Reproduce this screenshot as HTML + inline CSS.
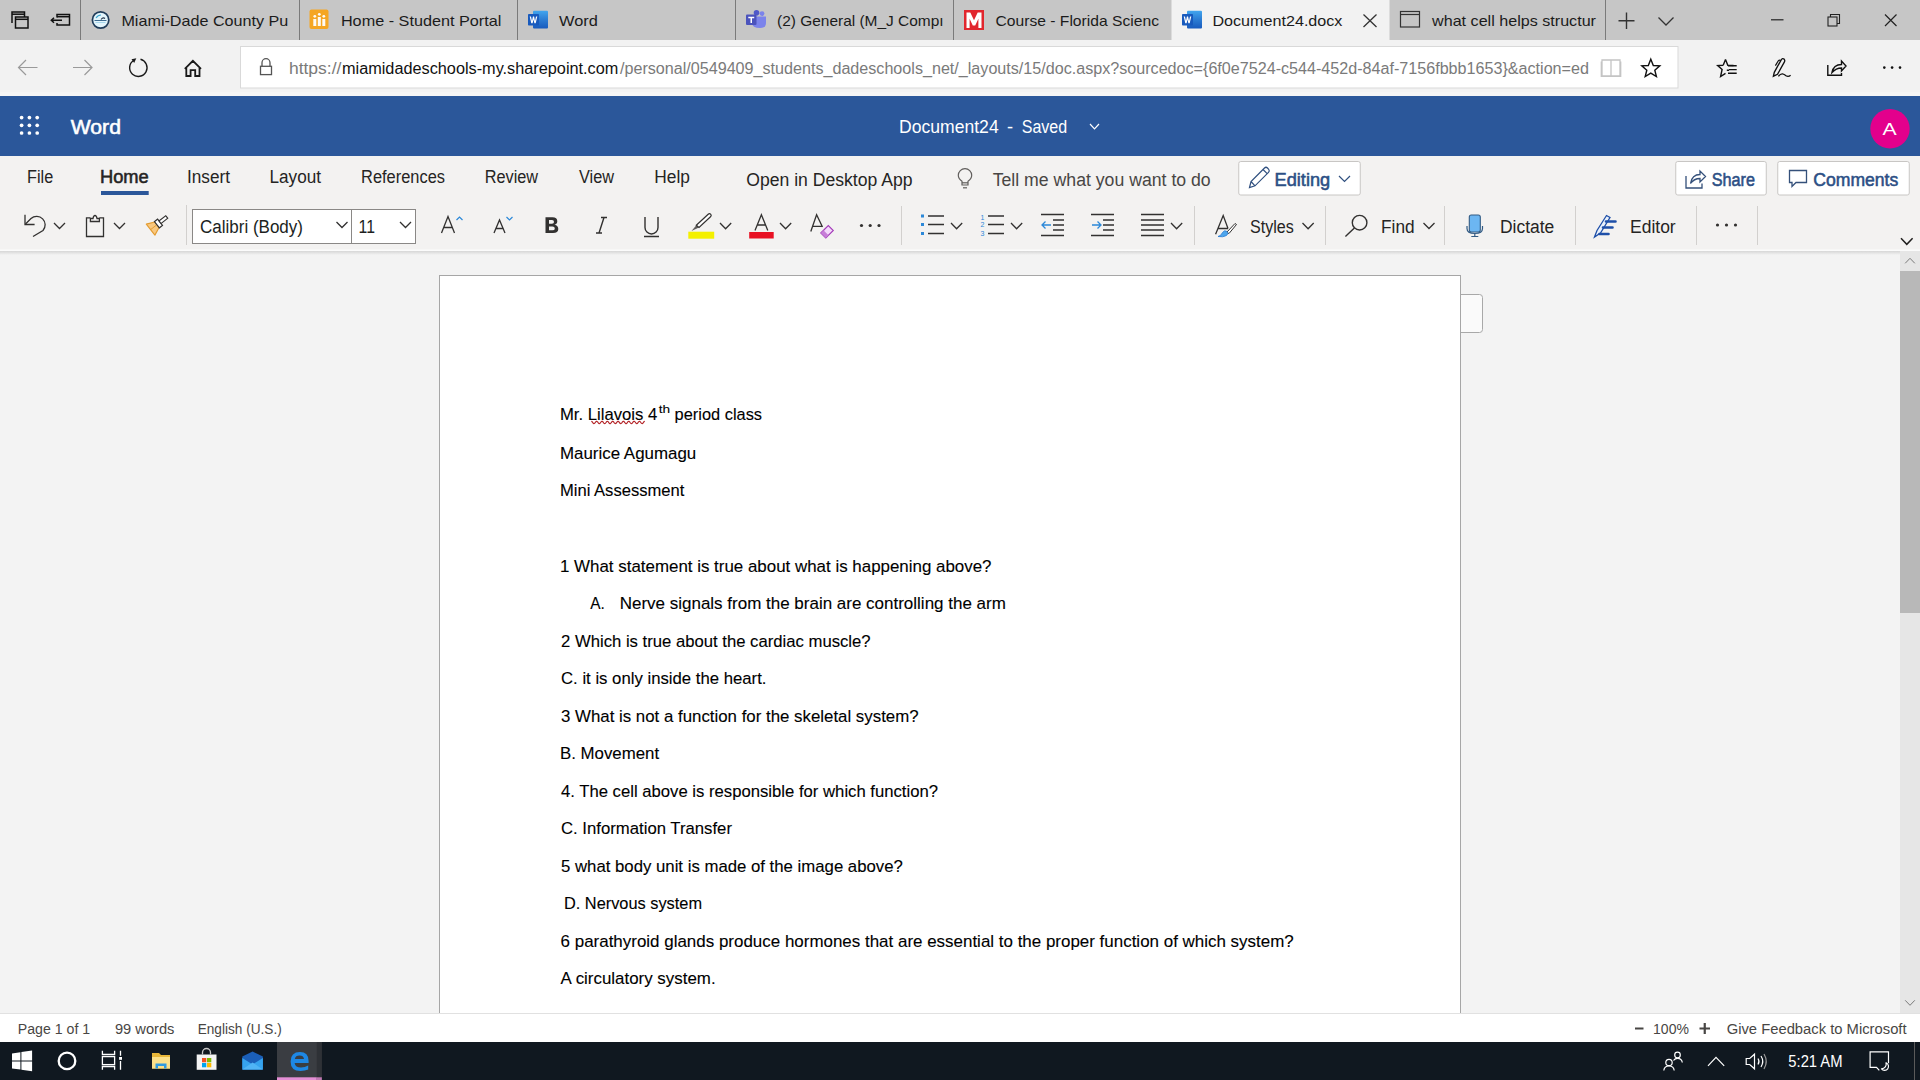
<!DOCTYPE html>
<html><head><meta charset="utf-8"><style>
html,body{margin:0;padding:0;width:1920px;height:1080px;overflow:hidden;background:#f3f2f1}
svg{position:absolute;left:0;top:0;display:block}
text{font-family:"Liberation Sans",sans-serif;white-space:pre}
</style></head><body>
<svg width="1920" height="1080" viewBox="0 0 1920 1080">
<defs>
<linearGradient id="wg" x1="0" y1="0" x2="0" y2="1"><stop offset="0" stop-color="#41a5ee"/><stop offset="0.5" stop-color="#2b7cd3"/><stop offset="1" stop-color="#185abd"/></linearGradient>
<linearGradient id="sh" x1="0" y1="0" x2="0" y2="1"><stop offset="0" stop-color="#d6d6d6"/><stop offset="1" stop-color="#f3f3f3"/></linearGradient>
</defs>
<!-- ===== tab strip ===== -->
<rect x="0" y="0" width="1920" height="40" fill="#c6c6c6"/>
<rect x="1171.5" y="0" width="218" height="40" fill="#f2f2f2"/>
<g stroke="#7a7a7a" stroke-width="1">
<line x1="80.5" y1="0" x2="80.5" y2="40"/>
<line x1="299.5" y1="0" x2="299.5" y2="40"/>
<line x1="517.5" y1="0" x2="517.5" y2="40"/>
<line x1="735.5" y1="0" x2="735.5" y2="40"/>
<line x1="953.5" y1="0" x2="953.5" y2="40"/>
<line x1="1605.5" y1="0" x2="1605.5" y2="40"/>
</g>
<!-- left tab icons -->
<g fill="none" stroke="#111" stroke-width="1.5">
<path d="M12 23V12H24.5V17"/>
<path d="M12 14.2H24.5"/>
<rect x="15.5" y="17" width="12.5" height="11"/>
<path d="M15.5 19.3H28"/>
<path d="M57 17.5V14.5H69.5V25H57V23"/>
<path d="M57 16.7H69.5"/>
<path d="M62 20.3H51.5M54 17.8L51.3 20.3L54 22.8"/>
</g>
<!-- favicons -->
<circle cx="100.6" cy="20" r="8.2" fill="#e2f4fb" stroke="#1f3c5a" stroke-width="1.7"/>
<path d="M94.5 20.5h12" stroke="#2a5b85" stroke-width="0.9"/>
<path d="M96 18q2-3 5-3" stroke="#3ba6cf" stroke-width="1.1" fill="none"/>
<path d="M101 19.5q2-2.5 4-1" stroke="#22334a" stroke-width="1.2" fill="none"/>
<path d="M95.5 22.5h10" stroke="#9fd3ea" stroke-width="0.9"/>
<rect x="309.5" y="9.5" width="19" height="19.5" rx="2" fill="#f5a623"/>
<g fill="#fff" opacity="0.95"><rect x="313.3" y="19" width="3" height="7"/><rect x="317.8" y="17" width="3" height="9"/><rect x="322.3" y="19" width="3" height="7"/><circle cx="314.8" cy="16.3" r="1.4"/><circle cx="319.3" cy="14.3" r="1.4"/><circle cx="323.8" cy="16.3" r="1.4"/></g>
<!-- word icon tab3 -->
<g>
<rect x="533" y="10.8" width="15" height="17.8" rx="1" fill="url(#wg)"/>
<rect x="528" y="13.9" width="11" height="11.7" rx="0.8" fill="#185abd"/>
<path d="M529.7 16.5L531.3 23.3H532.6L533.5 19.5L534.4 23.3H535.7L537.3 16.5H536L535 21L534.1 16.5H532.9L532 21L531 16.5Z" fill="#fff"/>
</g>
<!-- teams -->
<circle cx="762" cy="13.6" r="2.4" fill="#7b83eb"/>
<circle cx="756.5" cy="12.8" r="2.8" fill="#5059c9"/>
<path d="M752 16.5H766V23Q766 28 760 28Q752 28 752 23Z" fill="#7b83eb"/>
<rect x="746" y="14.5" width="10.5" height="10.5" rx="1" fill="#4b53bc"/>
<path d="M748.3 16.8H754.2V18.2H752V23H750.5V18.2H748.3Z" fill="#fff"/>
<!-- M icon -->
<rect x="964" y="10" width="20" height="20" fill="#e1262e"/>
<path d="M966.5 28V12.5h3.8l3.7 7.8 3.7-7.8h3.8V28h-3.1V18.8l-3.2 6.6h-2.4l-3.2-6.6V28z" fill="#fff"/>
<!-- active word icon -->
<g transform="translate(654 0)">
<rect x="533" y="10.8" width="15" height="17.8" rx="1" fill="url(#wg)"/>
<rect x="528" y="13.9" width="11" height="11.7" rx="0.8" fill="#185abd"/>
<path d="M529.7 16.5L531.3 23.3H532.6L533.5 19.5L534.4 23.3H535.7L537.3 16.5H536L535 21L534.1 16.5H532.9L532 21L531 16.5Z" fill="#fff"/>
</g>
<!-- close x -->
<path d="M1363.5 14.5L1376.5 27M1376.5 14.5L1363.5 27" stroke="#333" stroke-width="1.3"/>
<!-- window icon -->
<rect x="1400.5" y="11.5" width="19" height="15.5" fill="none" stroke="#333" stroke-width="1.2"/>
<line x1="1400.5" y1="14.5" x2="1419.5" y2="14.5" stroke="#333" stroke-width="1.2"/>
<!-- plus, chevron -->
<path d="M1626.5 12.5V29M1618.5 20.8H1634.5" stroke="#333" stroke-width="1.4"/>
<path d="M1658.5 17.5L1666 25L1673.5 17.5" fill="none" stroke="#333" stroke-width="1.3"/>
<!-- window controls -->
<path d="M1771 19.8H1783.5" stroke="#222" stroke-width="1.2"/>
<rect x="1828" y="17" width="9" height="9" fill="none" stroke="#222" stroke-width="1.1"/>
<path d="M1830.5 17V14.5H1839.5V23.5H1837" fill="none" stroke="#222" stroke-width="1.1"/>
<path d="M1885 14.5L1896.5 26M1896.5 14.5L1885 26" stroke="#222" stroke-width="1.2"/>

<!-- ===== address bar ===== -->
<rect x="0" y="40" width="1920" height="56" fill="#f2f2f2"/>
<rect x="0" y="92" width="1920" height="4" fill="#f5f5f5"/>
<rect x="240.5" y="46.5" width="1437.5" height="41.5" fill="#fff" stroke="#d9d9d9" stroke-width="1"/>
<g fill="none" stroke="#9a9a9a" stroke-width="1.2">
<path d="M37.5 67.5H18.5M26 60L18.5 67.5L26 75"/>
<path d="M73 67.5H92M84.5 60L92 67.5L84.5 75"/>
</g>
<g fill="none" stroke="#1a1a1a" stroke-width="1.4">
<path d="M133.5 60.5A8.7 8.7 0 1 0 140.5 59.3"/>
</g>
<path d="M131.5 59.2L136.3 58.3L134.2 63Z" fill="#1a1a1a"/>
<path d="M184.8 68.8L192.9 60.8L201 68.8M186.3 67.3V76H190.6V70.2H195.2V76H199.5V67.3" fill="none" stroke="#1a1a1a" stroke-width="1.8" stroke-linejoin="miter"/>
<g fill="none" stroke="#555" stroke-width="1.3">
<rect x="260.5" y="66.3" width="11" height="8.3"/>
<path d="M262 66.3V62.7A4 4 0 0 1 270 62.7V66.3"/>
</g>
<g fill="none" stroke="#c4c4c4" stroke-width="1.3">
<path d="M1602 60H1611V76H1602ZM1611 60H1620V76H1611M1601.3 61.5V76.3H1620.7V61.5"/>
</g>
<path d="M1650.8 59.2L1653.3 65.5L1659.8 65.9L1654.8 70.2L1656.4 76.6L1650.8 73.1L1645.2 76.6L1646.8 70.2L1641.8 65.9L1648.3 65.5Z" fill="none" stroke="#111" stroke-width="1.4"/>
<!-- favorites list -->
<g fill="none" stroke="#111" stroke-width="1.4">
<path d="M1725.5 59.5L1727.8 65.2L1733.5 65.5M1729 70.3L1726.8 70.3 M1723.2 65.2L1725.5 59.5 M1723.2 65.2L1717.7 65.6L1722.1 69.5L1720.6 76.5L1725.5 73.3"/>
<path d="M1728 65.8H1736.7M1729 69.6H1736.7M1728 73.3H1736.7"/>
<!-- pen -->
<path d="M1773.4 76.2L1774.3 72.3L1781.2 59.8Q1782.6 57.9 1784.1 59.1Q1785.3 60.4 1784.3 62.1L1777.5 74.3Z" stroke-width="1.35"/>
<path d="M1775.4 65.6L1778.3 60.8Q1779.3 59.6 1780.6 60.4" stroke-width="1.2"/>
<path d="M1778.4 76.3Q1780.3 73.6 1782.5 73.8Q1784.2 74 1786 75.8Q1788.4 77.2 1790.6 75.2" stroke-width="1.3"/>
<!-- share -->
<path d="M1827.8 65V75.3H1841.5V73"/>
<path d="M1832 72.5Q1833.5 64.5 1841.5 64.5V61L1846 66L1841.5 71V68Q1836 68 1832 72.5Z"/>
</g>
<g fill="#111"><circle cx="1884.3" cy="67.6" r="1.3"/><circle cx="1892.1" cy="67.6" r="1.3"/><circle cx="1900" cy="67.6" r="1.3"/></g>

<!-- ===== word header ===== -->
<rect x="0" y="96" width="1920" height="60" fill="#2b579a"/>
<g fill="#fff">
<circle cx="21.6" cy="117.6" r="1.85"/><circle cx="29.4" cy="117.6" r="1.85"/><circle cx="37.2" cy="117.6" r="1.85"/>
<circle cx="21.6" cy="125.3" r="1.85"/><circle cx="29.4" cy="125.3" r="1.85"/><circle cx="37.2" cy="125.3" r="1.85"/>
<circle cx="21.6" cy="133" r="1.85"/><circle cx="29.4" cy="133" r="1.85"/><circle cx="37.2" cy="133" r="1.85"/>
</g>
<path d="M1090 124L1094.5 128.8L1099 124" fill="none" stroke="#fff" stroke-width="1.2"/>
<circle cx="1890" cy="128.8" r="19.7" fill="#e3008c"/>

<!-- ===== ribbon ===== -->
<rect x="0" y="156" width="1920" height="94" fill="#f3f2f1"/>
<rect x="101" y="191" width="47.7" height="4" fill="#2b579a"/>
<!-- lightbulb -->
<g fill="none" stroke="#605e5c" stroke-width="1.2">
<path d="M962 185V181.3Q958.3 178.8 958.3 175.3A6.7 6.7 0 0 1 971.7 175.3Q971.7 178.8 968 181.3V185Z"/>
<path d="M962 182.8H968"/>
<path d="M963 187.8H967"/>
</g>
<!-- Editing button -->
<rect x="1238.75" y="161.5" width="121.5" height="33.5" rx="2" fill="#fff" stroke="#c8c6c4"/>
<g fill="none" stroke="#2f4f7f" stroke-width="1.2">
<path d="M1249.5 187.5L1251 181.5L1264.5 168Q1266 166.5 1267.5 168L1268.7 169.3Q1270 170.8 1268.5 172.3L1255 185.8Z M1251 181.5L1255 185.8 M1263 169.5L1267.2 173.7"/>
<path d="M1339 176L1344.5 181.5L1350 176"/>
</g>
<!-- Share button -->
<rect x="1675.75" y="161.5" width="90.5" height="33.5" rx="2" fill="#fff" stroke="#c8c6c4"/>
<g fill="none" stroke="#34507a" stroke-width="1.3">
<path d="M1686 176V188H1702V183.5"/>
<path d="M1690.5 183.5Q1692 174.5 1700 174.5V171L1705.5 176.5L1700 182V178.5Q1694 178.5 1690.5 183.5Z"/>
</g>
<!-- Comments -->
<rect x="1777.75" y="161.5" width="131.5" height="33.5" rx="2" fill="#fff" stroke="#c8c6c4"/>
<path d="M1789.5 170.5H1806.5V182.5H1796L1792 186.5V182.5H1789.5Z" fill="none" stroke="#34507a" stroke-width="1.3"/>

<!-- toolbar separators -->
<g stroke="#d2d0ce" stroke-width="1">
<line x1="186.5" y1="205" x2="186.5" y2="245"/>
<line x1="901.5" y1="206" x2="901.5" y2="245"/>
<line x1="1194.5" y1="206" x2="1194.5" y2="245"/>
<line x1="1325.5" y1="206" x2="1325.5" y2="245"/>
<line x1="1444.5" y1="206" x2="1444.5" y2="245"/>
<line x1="1575.5" y1="206" x2="1575.5" y2="245"/>
<line x1="1696.5" y1="206" x2="1696.5" y2="245"/>
<line x1="1757.5" y1="206" x2="1757.5" y2="245"/>
</g>
<!-- font boxes -->
<rect x="192.5" y="209.5" width="223" height="34" fill="#fff" stroke="#8a8886"/>
<line x1="351.5" y1="209.5" x2="351.5" y2="243.5" stroke="#8a8886"/>
<g fill="none" stroke="#323130" stroke-width="1.3">
<!-- undo -->
<path d="M25 214.8V224.5H34.6"/>
<path d="M25.5 224L31 218.5A8.5 8.5 0 0 1 43 230.5L33 236.5"/>
<path d="M54 223L59.5 228.5L65 223"/>
<!-- clipboard -->
<path d="M90.4 217.8H86.5V236.5H103.5V217.8H99.4"/>
<path d="M90.4 221.5V218.5H93Q93.5 215.5 95 215.5Q96.5 215.5 97 218.5H99.4V221.5Z"/>
<path d="M114 223L119.5 228.5L125 223"/>
<!-- font chevrons -->
<path d="M336.5 222L342 227.5L347.5 222"/>
<path d="M400 222L405.5 227.5L411 222"/>
<!-- chevrons toolbar -->
<path d="M720 223L725.6 228.8L731.2 223"/>
<path d="M780 223L785.6 228.8L791.2 223"/>
<path d="M951 223L956.6 228.8L962.2 223"/>
<path d="M1011 223L1016.6 228.8L1022.2 223"/>
<path d="M1171 223L1176.6 228.8L1182.2 223"/>
<path d="M1302.5 223L1308.1 228.8L1313.7 223"/>
<path d="M1423.5 223L1429 228.5L1434.5 223"/>
</g>
<path d="M1901 238.3L1906.8 244.3L1912.6 238.3" fill="none" stroke="#201f1e" stroke-width="1.5"/>
<!-- format painter -->
<g transform="translate(156.5 225) rotate(52)">
<path d="M-3.5 -0.5H3.5L7 7.5H-7Z" fill="#f9c87f" stroke="#e39b2f" stroke-width="1.1" stroke-linejoin="round"/>
<path d="M0 0V7" stroke="#e39b2f" stroke-width="0.9"/>
<rect x="-4" y="-4.5" width="8" height="4" fill="#fff" stroke="#323130" stroke-width="1.15"/>
<rect x="-1.6" y="-13" width="3.2" height="8.5" fill="#fff" stroke="#323130" stroke-width="1.15"/>
</g>
<!-- A grow/shrink -->
<g fill="none" stroke="#323130" stroke-width="1.3">
<path d="M441.5 233L448 216.5L454.5 233M443.8 227.5H452.2"/>
<path d="M494 233L499.5 220L505 233M495.8 228.5H503.2"/>
</g>
<path d="M456.5 220L459.5 217L462.5 220" fill="none" stroke="#2b88d8" stroke-width="1.2"/>
<path d="M506.5 217L509.5 220L512.5 217" fill="none" stroke="#2b88d8" stroke-width="1.2"/>
<path d="M545.5 217.3H552.5Q557.3 217.3 557.3 221.2Q557.3 224 554.5 224.8Q558.3 225.5 558.3 229Q558.3 233 553 233H545.5Z M549 220V223.8H552Q554 223.8 554 222Q554 220 552 220Z M549 226.5V230.3H552.5Q554.8 230.3 554.8 228.4Q554.8 226.5 552.5 226.5Z" fill="#323130" fill-rule="evenodd"/>
<path d="M601 217.5H607M596 233H602M604 217.5L599 233" fill="none" stroke="#323130" stroke-width="1.4"/>
<path d="M645 217V227.5A6.5 6.5 0 0 0 658 227.5V217M644 236.5H659" fill="none" stroke="#323130" stroke-width="1.4"/>
<!-- highlighter -->
<rect x="688.3" y="231.7" width="25.9" height="7" fill="#f4f000"/>
<path d="M691.5 231L696.3 225.3L699 227.5Z" fill="#605e5c"/>
<path d="M696.3 225.3L708.2 214.2Q709.5 213 710.8 214.3Q711.8 215.6 710.5 216.8L699 227.5Z" fill="#fff" stroke="#323130" stroke-width="1.2"/>
<!-- font color -->
<rect x="749.2" y="232" width="24.5" height="6.5" fill="#e81123"/>
<path d="M755 230.5L761.4 214.8L767.8 230.5M757.3 225H765.5" fill="none" stroke="#323130" stroke-width="1.3"/>
<!-- clear formatting -->
<path d="M810.8 231.5L816.6 214.8L822.5 227M812.6 226.3H821.6" fill="none" stroke="#323130" stroke-width="1.3"/>
<path d="M820.8 233L828.3 225.5L833.3 230.5L825.8 238Z" fill="#f4d8fb" stroke="#a33bb8" stroke-width="1.1"/>
<path d="M820.8 233L823.5 230.3L828.5 235.3L825.8 238Z" fill="#c77dd8"/>
<g fill="#323130"><circle cx="861.5" cy="225.5" r="1.6"/><circle cx="870.2" cy="225.5" r="1.6"/><circle cx="879" cy="225.5" r="1.6"/></g>
<!-- bullets -->
<g fill="#2b88d8"><rect x="921" y="214.5" width="3" height="3"/><rect x="921" y="223" width="3" height="3"/><rect x="921" y="232" width="3" height="3"/></g>
<g stroke="#323130" stroke-width="1.3"><path d="M928 216H944M928 224.5H944M928 233.5H944"/></g>
<!-- numbering -->
<g fill="#2b88d8" font-family="Liberation Sans" font-size="7"><text x="980.5" y="219.5">1</text><text x="980.5" y="227.3">2</text><text x="980.5" y="235.5">3</text></g>
<g stroke="#323130" stroke-width="1.3"><path d="M988 216H1004M988 224.5H1004M988 233.5H1004"/></g>
<!-- indent -->
<g stroke="#323130" stroke-width="1.3" fill="none">
<path d="M1041 214.5H1064M1053 220H1064M1053 225H1064M1053 230H1064M1041 235.5H1064"/>
<path d="M1091 214.5H1114M1103 220H1114M1103 225H1114M1103 230H1114M1091 235.5H1114"/>
<path d="M1141 214.5H1164M1141 220H1164M1141 225H1164M1141 230H1164M1141 235.5H1164"/>
</g>
<g stroke="#2b88d8" stroke-width="1.3" fill="none">
<path d="M1051 225H1042M1045.5 221.5L1042 225L1045.5 228.5"/>
<path d="M1092 225H1101M1097.5 221.5L1101 225L1097.5 228.5"/>
</g>
<!-- styles -->
<path d="M1215.6 234.2L1223.2 215.6L1228 228.5M1218 228.5H1228" fill="none" stroke="#323130" stroke-width="1.3"/>
<path d="M1226.5 232.5L1235 223.5L1236.5 224.5L1229 233.5Z" fill="#fff" stroke="#323130" stroke-width="1"/>
<path d="M1218 236.5Q1221 236 1222.5 232.5Q1224.5 229.5 1227 231.5Q1229 233.5 1226.5 235.5Q1223 237.5 1218 236.5Z" fill="#4ea6ec" stroke="#2b7cd3" stroke-width="0.8"/>
<!-- find -->
<g fill="none" stroke="#323130" stroke-width="1.4">
<circle cx="1359.6" cy="222.7" r="7.3"/>
<path d="M1354.4 227.9L1345.4 236.6"/>
</g>
<!-- dictate mic -->
<rect x="1469.3" y="215" width="11" height="17" rx="2" fill="#6cb6f2" stroke="#325b84" stroke-width="1.1"/>
<path d="M1467 226V228.5Q1467 233.5 1474.8 233.5Q1482.5 233.5 1482.5 228.5V226M1474.8 233.5V236.5M1471.3 236.5H1478.3" fill="none" stroke="#325b84" stroke-width="1.2"/>
<!-- editor -->
<path d="M1594.5 237L1597 230.5L1606.5 215.5L1610 217.5L1600.5 233Z" fill="#e8f0fb" stroke="#1e4fa8" stroke-width="1.3"/>
<g stroke="#1e4fa8" stroke-width="2.6" stroke-linecap="round">
<path d="M1606 221.5H1615.5M1603 227.5H1612.5M1599.5 234H1608.5"/>
</g>
<g fill="#323130"><circle cx="1717.5" cy="225" r="1.6"/><circle cx="1726.5" cy="225" r="1.6"/><circle cx="1735.5" cy="225" r="1.6"/></g>

<!-- ribbon bottom shadow -->
<rect x="0" y="249.5" width="1920" height="1.5" fill="#fbfbfb"/>
<rect x="0" y="251" width="1920" height="4" fill="url(#sh)"/>

<!-- ===== canvas ===== -->
<rect x="0" y="255" width="1900" height="758" fill="#f3f3f3"/>
<rect x="439.5" y="275.5" width="1021" height="760" fill="#fff" stroke="#a6a6a6" stroke-width="1"/>
<path d="M1461 294.5H1479.5A3 3 0 0 1 1482.5 297.5V329.5A3 3 0 0 1 1479.5 332.5H1461" fill="#fafafa" stroke="#a8a8a8" stroke-width="1"/>
<!-- scrollbar -->
<rect x="1900" y="251" width="20" height="762" fill="#e6e6e6"/>
<rect x="1900" y="271" width="20" height="342" fill="#b8b8b8"/>
<path d="M1905.2 263.3L1910 258.3L1914.8 263.3" fill="none" stroke="#7a7a7a" stroke-width="1"/>
<path d="M1905.2 1000.3L1910 1005.3L1914.8 1000.3" fill="none" stroke="#7a7a7a" stroke-width="1"/>
<!-- spell squiggle -->
<polyline points="591.30 421.25 591.80 421.45 592.30 421.99 592.80 422.68 593.30 423.29 593.80 423.62 594.30 423.56 594.80 423.13 595.30 422.47 595.80 421.80 596.30 421.35 596.80 421.27 597.30 421.58 597.80 422.19 598.30 422.88 598.80 423.43 599.30 423.65 599.80 423.47 600.30 422.95 600.80 422.26 601.30 421.63 601.80 421.28 602.30 421.32 602.80 421.74 603.30 422.40 603.80 423.07 604.30 423.54 604.80 423.64 605.30 423.34 605.80 422.75 606.30 422.05 606.80 421.49 607.30 421.25 607.80 421.41 608.30 421.92 608.80 422.61 609.30 423.24 609.80 423.61 610.30 423.59 610.80 423.19 611.30 422.54 611.80 421.86 612.30 421.38 612.80 421.26 613.30 421.54 613.80 422.12 614.30 422.81 614.80 423.39 615.30 423.65 615.80 423.50 616.30 423.01 616.80 422.33 617.30 421.69 617.80 421.30 618.30 421.30 618.80 421.69 619.30 422.33 619.80 423.01 620.30 423.50 620.80 423.65 621.30 423.39 621.80 422.81 622.30 422.12 622.80 421.54 623.30 421.26 623.80 421.38 624.30 421.86 624.80 422.54 625.30 423.19 625.80 423.59 626.30 423.61 626.80 423.24 627.30 422.61 627.80 421.92 628.30 421.41 628.80 421.25 629.30 421.49 629.80 422.05 630.30 422.75 630.80 423.34 631.30 423.64 631.80 423.54 632.30 423.07 632.80 422.40 633.30 421.74 633.80 421.32 634.30 421.28 634.80 421.63 635.30 422.26 635.80 422.95 636.30 423.47 636.80 423.65 637.30 423.43 637.80 422.88 638.30 422.19 638.80 421.58 639.30 421.27 639.80 421.35 640.30 421.80 640.80 422.47 641.30 423.13 641.80 423.56 642.30 423.62 642.80 423.29 643.30 422.68 643.80 421.99 644.30 421.45 644.80 421.25" fill="none" stroke="#b4262a" stroke-width="1.15"/>

<!-- ===== status ===== -->
<rect x="0" y="1013" width="1920" height="29" fill="#fff"/>
<rect x="0" y="1013" width="1920" height="1" fill="#e1e1e1"/>
<path d="M1635 1028.5H1643.5M1699.5 1028.5H1710M1704.75 1023V1034" stroke="#484644" stroke-width="2.2"/>

<!-- ===== taskbar ===== -->
<rect x="0" y="1042" width="1920" height="38" fill="#101820"/>
<rect x="277" y="1042" width="44.5" height="38" fill="#3a3d42"/>
<rect x="277" y="1077.3" width="44.5" height="2.7" fill="#e48fd5"/>
<!-- windows logo -->
<path d="M12 1053.5L20.4 1052.3V1060.4H12Z M21.4 1052.1L32.1 1050.6V1060.4H21.4Z M12 1061.4H20.4V1069.6L12 1068.4Z M21.4 1061.4H32.1V1071.2L21.4 1069.7Z" fill="#fff"/>
<circle cx="67" cy="1060.9" r="8.3" fill="none" stroke="#fff" stroke-width="2.3"/>
<g fill="none" stroke="#fff" stroke-width="1.3">
<path d="M102.4 1050.8V1054.5H114.6V1050.8"/>
<rect x="102.4" y="1056.6" width="12.2" height="8"/>
<path d="M102.4 1069.8V1066.5H114.6V1069.8"/>
<path d="M120.5 1050.8V1055.8M120.5 1061V1069.8"/>
</g>
<rect x="119.1" y="1057" width="2.9" height="2.8" fill="#fff"/>
<!-- explorer -->
<path d="M152 1053H159L161 1055H170V1068.6H152Z" fill="#e8b73a"/>
<rect x="152" y="1057" width="18" height="11.6" fill="#fbe08a"/>
<path d="M155.5 1068.6V1063.5H166.5V1068.6H164V1066H158V1068.6Z" fill="#2f9ae0"/>
<!-- store -->
<path d="M196.7 1054.5H216.5V1069.8H196.7Z" fill="#f4f4f4"/>
<path d="M202.5 1054.5V1052.5A4 4 0 0 1 210.5 1052.5V1054.5" fill="none" stroke="#c8c8c8" stroke-width="1.3"/>
<rect x="202" y="1058" width="4.3" height="4.3" fill="#f25022"/><rect x="207" y="1058" width="4.3" height="4.3" fill="#7fba00"/>
<rect x="202" y="1063" width="4.3" height="4.3" fill="#00a4ef"/><rect x="207" y="1063" width="4.3" height="4.3" fill="#ffb900"/>
<!-- mail -->
<path d="M242.3 1056.5L252.6 1051.5L262.9 1056.5V1069.5H242.3Z" fill="#1b5fb8"/>
<path d="M242.3 1058L252.6 1064.5L262.9 1058V1069.5H242.3Z" fill="#36a3ee"/>
<path d="M242.3 1069.5L252.6 1062.5L262.9 1069.5Z" fill="#50b4f5"/>
<!-- edge -->
<rect x="316.8" y="1042" width="5" height="38" fill="#2e3136"/>
<rect x="316.8" y="1077.3" width="5" height="2.7" fill="#c27ab5"/>
<path d="M308.6 1063H294.6Q295.3 1067.6 301 1067.6Q305 1067.6 308.2 1065.6V1069.6Q305 1071 300.5 1071Q290.6 1071 290.6 1061.5Q290.6 1052 300 1052Q308.6 1052 308.6 1061Z M294.8 1059H304Q303.5 1055.6 299.5 1055.6Q295.5 1055.6 294.8 1059Z" fill="#1e88e5" fill-rule="evenodd"/>
<!-- tray -->
<g fill="none" stroke="#fff" stroke-width="1.2">
<circle cx="1669" cy="1062.5" r="3.2"/><path d="M1663.8 1070.5Q1664.3 1066 1669 1066Q1673.7 1066 1674.2 1070.5"/>
<circle cx="1677.5" cy="1055" r="2.8"/><path d="M1673.5 1060.5Q1675 1058.3 1677.5 1058.3Q1681.8 1058.3 1682.3 1062.5"/>
<path d="M1708 1065.8L1716 1057.3L1724.2 1065.8"/>
<path d="M1746.2 1058.5H1749.7L1754.5 1054.2V1068.8L1749.7 1064.5H1746.2Z"/>
<path d="M1758 1058.5Q1760 1061.5 1758 1064.5M1761 1056Q1764.5 1061.5 1761 1067"/>
<path d="M1764 1054Q1768.5 1061.5 1764 1069" stroke="#9a9a9a"/>
<path d="M1888.5 1063.2V1051.9H1870.1V1067.3H1876.5L1879.3 1070.3"/>
</g>
<path d="M1886 1062.8A3.9 3.9 0 1 1 1881.5 1068.8A4.6 4.6 0 0 0 1886 1062.8Z" fill="none" stroke="#fff" stroke-width="1.2" stroke-linejoin="round"/>
<rect x="1914" y="1042" width="1" height="38" fill="#5a5a5a"/>

<g id="texts">
<text x="121.42" y="26.00" font-size="15" fill="#1b1b1b" textLength="166.95" lengthAdjust="spacingAndGlyphs">Miami-Dade County Pu</text>
<text x="340.92" y="26.00" font-size="15" fill="#1b1b1b" textLength="160.44" lengthAdjust="spacingAndGlyphs">Home - Student Portal</text>
<text x="559.00" y="26.00" font-size="15" fill="#1b1b1b" textLength="38.77" lengthAdjust="spacingAndGlyphs">Word</text>
<text x="777.00" y="26.00" font-size="15" fill="#1b1b1b" textLength="166.60" lengthAdjust="spacingAndGlyphs">(2) General (M_J Compı</text>
<text x="995.50" y="26.00" font-size="15" fill="#1b1b1b" textLength="163.48" lengthAdjust="spacingAndGlyphs">Course - Florida Scienc</text>
<text x="1212.42" y="26.00" font-size="15" fill="#1b1b1b" textLength="130.04" lengthAdjust="spacingAndGlyphs">Document24.docx</text>
<text x="1432.07" y="26.00" font-size="15" fill="#1b1b1b" textLength="163.92" lengthAdjust="spacingAndGlyphs">what cell helps structur</text>
<text x="288.91" y="74.25" font-size="16" fill="#7a7a7a" textLength="52.49" lengthAdjust="spacingAndGlyphs">https://</text>
<text x="341.98" y="74.25" font-size="16" fill="#111" textLength="276.35" lengthAdjust="spacingAndGlyphs">miamidadeschools-my.sharepoint.com</text>
<text x="620.00" y="74.25" font-size="16" fill="#7a7a7a" textLength="968.91" lengthAdjust="spacingAndGlyphs">/personal/0549409_students_dadeschools_net/_layouts/15/doc.aspx?sourcedoc={6f0e7524-c544-452d-84af-7156fbbb1653}&amp;action=ed</text>
<text x="70.80" y="134.00" font-size="19.5" stroke="#fff" stroke-width="0.55" fill="#fff" textLength="50.12" lengthAdjust="spacingAndGlyphs">Word</text>
<text x="899.04" y="133.00" font-size="18.3" fill="#fff" textLength="99.62" lengthAdjust="spacingAndGlyphs">Document24</text>
<text x="1007.00" y="133.00" font-size="18.3" fill="#fff" textLength="6.09" lengthAdjust="spacingAndGlyphs">-</text>
<text x="1021.70" y="133.00" font-size="18.3" fill="#fff" textLength="45.53" lengthAdjust="spacingAndGlyphs">Saved</text>
<text x="1882.50" y="135.00" font-size="17" fill="#fff" textLength="14.17" lengthAdjust="spacingAndGlyphs">A</text>
<text x="27.10" y="183.30" font-size="18" fill="#252423" textLength="26.16" lengthAdjust="spacingAndGlyphs">File</text>
<text x="99.98" y="183.30" font-size="18" stroke="#252423" stroke-width="0.55" fill="#252423" textLength="48.78" lengthAdjust="spacingAndGlyphs">Home</text>
<text x="187.05" y="183.30" font-size="18" fill="#252423" textLength="42.96" lengthAdjust="spacingAndGlyphs">Insert</text>
<text x="269.55" y="183.30" font-size="18" fill="#252423" textLength="51.45" lengthAdjust="spacingAndGlyphs">Layout</text>
<text x="361.09" y="183.30" font-size="18" fill="#252423" textLength="83.91" lengthAdjust="spacingAndGlyphs">References</text>
<text x="484.80" y="183.30" font-size="18" fill="#252423" textLength="53.30" lengthAdjust="spacingAndGlyphs">Review</text>
<text x="579.00" y="183.30" font-size="18" fill="#252423" textLength="35.09" lengthAdjust="spacingAndGlyphs">View</text>
<text x="654.34" y="183.30" font-size="18" fill="#252423" textLength="35.67" lengthAdjust="spacingAndGlyphs">Help</text>
<text x="746.30" y="185.80" font-size="18" fill="#252423" textLength="166.21" lengthAdjust="spacingAndGlyphs">Open in Desktop App</text>
<text x="992.70" y="185.80" font-size="18" fill="#484644" textLength="218.01" lengthAdjust="spacingAndGlyphs">Tell me what you want to do</text>
<text x="1274.59" y="185.80" font-size="18" stroke="#2c4f85" stroke-width="0.55" fill="#2c4f85" textLength="55.63" lengthAdjust="spacingAndGlyphs">Editing</text>
<text x="1711.70" y="185.80" font-size="18" stroke="#2c4f85" stroke-width="0.55" fill="#2c4f85" textLength="43.31" lengthAdjust="spacingAndGlyphs">Share</text>
<text x="1813.30" y="185.80" font-size="18" stroke="#2c4f85" stroke-width="0.55" fill="#2c4f85" textLength="85.00" lengthAdjust="spacingAndGlyphs">Comments</text>
<text x="200.00" y="233.00" font-size="18" fill="#201f1e" textLength="102.94" lengthAdjust="spacingAndGlyphs">Calibri (Body)</text>
<text x="358.62" y="233.00" font-size="18" fill="#201f1e" textLength="16.39" lengthAdjust="spacingAndGlyphs">11</text>
<text x="1250.00" y="232.50" font-size="18" fill="#252423" textLength="43.75" lengthAdjust="spacingAndGlyphs">Styles</text>
<text x="1381.04" y="232.50" font-size="18" fill="#252423" textLength="33.53" lengthAdjust="spacingAndGlyphs">Find</text>
<text x="1500.03" y="232.50" font-size="18" fill="#252423" textLength="54.28" lengthAdjust="spacingAndGlyphs">Dictate</text>
<text x="1630.03" y="232.50" font-size="18" fill="#252423" textLength="45.67" lengthAdjust="spacingAndGlyphs">Editor</text>
<text x="17.77" y="1034.00" font-size="15.3" fill="#484644" textLength="72.39" lengthAdjust="spacingAndGlyphs">Page 1 of 1</text>
<text x="114.90" y="1034.00" font-size="15.3" fill="#484644" textLength="59.56" lengthAdjust="spacingAndGlyphs">99 words</text>
<text x="197.71" y="1034.00" font-size="15.3" fill="#484644" textLength="84.07" lengthAdjust="spacingAndGlyphs">English (U.S.)</text>
<text x="1653.08" y="1034.00" font-size="15.3" fill="#484644" textLength="35.85" lengthAdjust="spacingAndGlyphs">100%</text>
<text x="1726.70" y="1034.00" font-size="15.3" fill="#484644" textLength="179.88" lengthAdjust="spacingAndGlyphs">Give Feedback to Microsoft</text>
<text x="1788.30" y="1067.30" font-size="16.8" fill="#fff" textLength="54.25" lengthAdjust="spacingAndGlyphs">5:21 AM</text>
<text x="559.95" y="420.00" font-size="15.9" stroke="#000" stroke-width="0.1" fill="#000" textLength="97.38" lengthAdjust="spacingAndGlyphs">Mr. Lilavois 4</text>
<text x="658.75" y="412.50" font-size="11" stroke="#000" stroke-width="0.1" fill="#000" textLength="11.40" lengthAdjust="spacingAndGlyphs">th</text>
<text x="674.57" y="420.00" font-size="15.9" stroke="#000" stroke-width="0.1" fill="#000" textLength="87.48" lengthAdjust="spacingAndGlyphs">period class</text>
<text x="559.94" y="459.00" font-size="15.9" stroke="#000" stroke-width="0.1" fill="#000" textLength="136.34" lengthAdjust="spacingAndGlyphs">Maurice Agumagu</text>
<text x="559.96" y="496.00" font-size="15.9" stroke="#000" stroke-width="0.1" fill="#000" textLength="124.43" lengthAdjust="spacingAndGlyphs">Mini Assessment</text>
<text x="559.94" y="571.80" font-size="15.9" stroke="#000" stroke-width="0.1" fill="#000" textLength="431.59" lengthAdjust="spacingAndGlyphs">1 What statement is true about what is happening above?</text>
<text x="590.30" y="609.30" font-size="15.9" stroke="#000" stroke-width="0.1" fill="#000" textLength="14.57" lengthAdjust="spacingAndGlyphs">A.</text>
<text x="619.73" y="609.30" font-size="15.9" stroke="#000" stroke-width="0.1" fill="#000" textLength="386.12" lengthAdjust="spacingAndGlyphs">Nerve signals from the brain are controlling the arm</text>
<text x="561.00" y="646.80" font-size="15.9" stroke="#000" stroke-width="0.1" fill="#000" textLength="309.63" lengthAdjust="spacingAndGlyphs">2 Which is true about the cardiac muscle?</text>
<text x="561.00" y="684.30" font-size="15.9" stroke="#000" stroke-width="0.1" fill="#000" textLength="205.49" lengthAdjust="spacingAndGlyphs">C. it is only inside the heart.</text>
<text x="561.00" y="721.80" font-size="15.9" stroke="#000" stroke-width="0.1" fill="#000" textLength="357.58" lengthAdjust="spacingAndGlyphs">3 What is not a function for the skeletal system?</text>
<text x="559.94" y="759.30" font-size="15.9" stroke="#000" stroke-width="0.1" fill="#000" textLength="99.24" lengthAdjust="spacingAndGlyphs">B. Movement</text>
<text x="561.00" y="796.80" font-size="15.9" stroke="#000" stroke-width="0.1" fill="#000" textLength="377.03" lengthAdjust="spacingAndGlyphs">4. The cell above is responsible for which function?</text>
<text x="561.00" y="834.30" font-size="15.9" stroke="#000" stroke-width="0.1" fill="#000" textLength="170.96" lengthAdjust="spacingAndGlyphs">C. Information Transfer</text>
<text x="561.00" y="871.80" font-size="15.9" stroke="#000" stroke-width="0.1" fill="#000" textLength="341.83" lengthAdjust="spacingAndGlyphs">5 what body unit is made of the image above?</text>
<text x="563.97" y="909.30" font-size="15.9" stroke="#000" stroke-width="0.1" fill="#000" textLength="138.07" lengthAdjust="spacingAndGlyphs">D. Nervous system</text>
<text x="560.60" y="946.80" font-size="15.9" stroke="#000" stroke-width="0.1" fill="#000" textLength="733.13" lengthAdjust="spacingAndGlyphs">6 parathyroid glands produce hormones that are essential to the proper function of which system?</text>
<text x="560.60" y="984.30" font-size="15.9" stroke="#000" stroke-width="0.1" fill="#000" textLength="155.00" lengthAdjust="spacingAndGlyphs">A circulatory system.</text>
</g>
</svg>
</body></html>
